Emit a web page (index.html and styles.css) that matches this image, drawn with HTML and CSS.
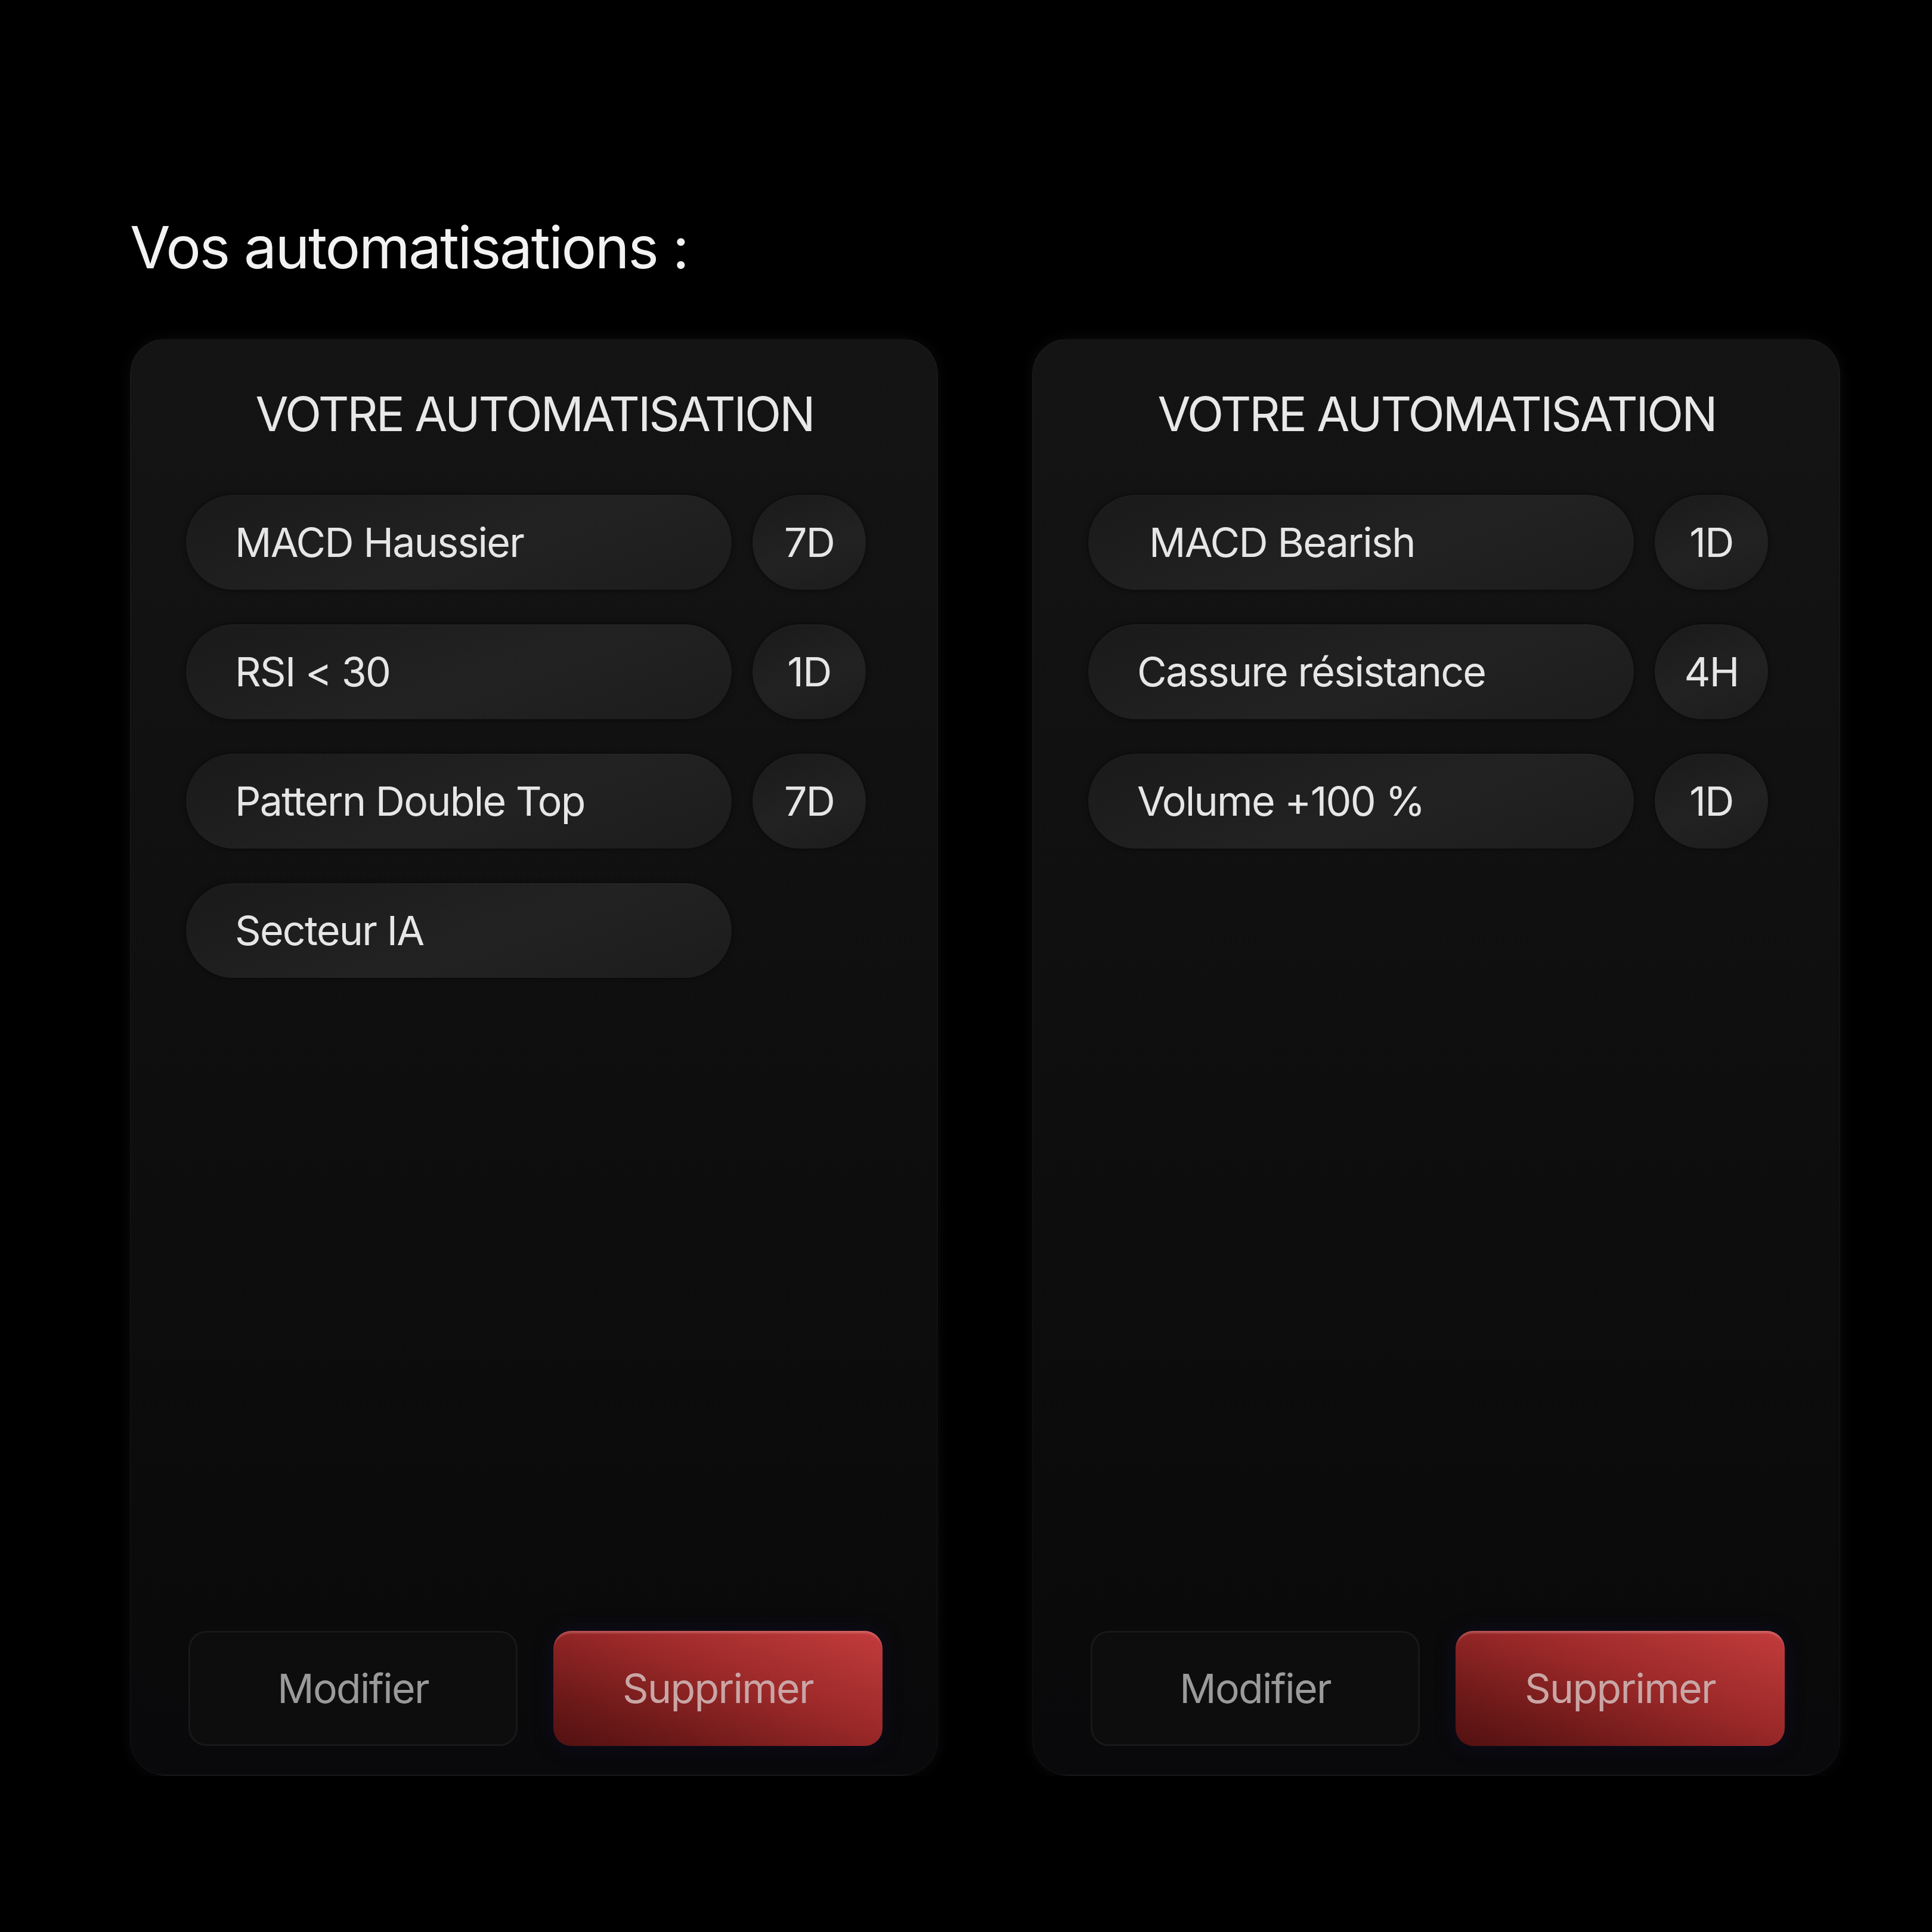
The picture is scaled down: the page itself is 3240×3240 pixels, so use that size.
FILE: index.html
```html
<!DOCTYPE html>
<html>
<head>
    <title>Vos automatisations</title>
    <link rel="stylesheet" href="styles.css">
</head>
<body>
    <div class="page">
        <h1 class="heading">Vos automatisations :</h1>

        <div class="cards">
            <div class="card">
                <h2 class="card-title">VOTRE AUTOMATISATION</h2>
                <div class="rules">
                    <div class="rule">
                        <div class="pill">MACD Haussier</div>
                        <div class="chip">7D</div>
                    </div>
                    <div class="rule">
                        <div class="pill">RSI &lt; 30</div>
                        <div class="chip">1D</div>
                    </div>
                    <div class="rule">
                        <div class="pill">Pattern Double Top</div>
                        <div class="chip">7D</div>
                    </div>
                    <div class="rule">
                        <div class="pill">Secteur IA</div>
                    </div>
                </div>
                <div class="actions">
                    <button class="btn btn-edit">Modifier</button>
                    <button class="btn btn-delete">Supprimer</button>
                </div>
            </div>

            <div class="card">
                <h2 class="card-title">VOTRE AUTOMATISATION</h2>
                <div class="rules">
                    <div class="rule">
                        <div class="pill pill-wide">MACD Bearish</div>
                        <div class="chip">1D</div>
                    </div>
                    <div class="rule">
                        <div class="pill">Cassure résistance</div>
                        <div class="chip">4H</div>
                    </div>
                    <div class="rule">
                        <div class="pill">Volume +100 %</div>
                        <div class="chip">1D</div>
                    </div>
                </div>
                <div class="actions">
                    <button class="btn btn-edit">Modifier</button>
                    <button class="btn btn-delete">Supprimer</button>
                </div>
            </div>
        </div>
    </div>
</body>
</html>
```

FILE: styles.css
```css
body {
    margin: 0;
    background-color: #000;
    font-family: Inter, "Liberation Sans", sans-serif;
    color: #ececec;
}
.page {
    padding: 356px 0 0 218px;
}
.heading {
    margin: 0;
    font-size: 98px;
    font-weight: 400;
    line-height: 1.2;
    letter-spacing: -0.025em;
    color: #f2f2f2;
}
.cards {
    display: grid;
    grid-template-columns: 1355px 1355px;
    gap: 158px;
    margin-top: 94px;
}
.card {
    height: 2410px;
    box-sizing: border-box;
    padding: 76px 90px 48px 92px;
    display: flex;
    flex-direction: column;
    border-radius: 60px;
    background: linear-gradient(180deg, #141414 0%, #101010 40%, #0b0b0b 80%, #09090b 100%);
    border: 2px solid rgba(255, 255, 255, 0.025);
    box-shadow: 0 0 24px rgba(20, 20, 20, 0.6);
}
.card-title {
    margin: 0;
    text-align: center;
    font-size: 80px;
    font-weight: 400;
    line-height: 1.2;
    letter-spacing: -0.038em;
    color: #e8e8e8;
}
.rules {
    display: flex;
    flex-direction: column;
    gap: 58px;
    margin-top: 88px;
}
.rule {
    display: flex;
    gap: 35px;
}
.pill, .chip {
    height: 159px;
    border-radius: 80px;
    display: flex;
    align-items: center;
    font-size: 68px;
    letter-spacing: -0.025em;
    color: #e6e6e6;
    background: linear-gradient(160deg, #1a1a1a 0%, #222 55%, #1c1c1c 100%);
    box-shadow: 0 0 8px rgba(0, 0, 0, 0.6), inset 0 2px 2px rgba(255, 255, 255, 0.02);
}
.pill {
    width: 915px;
    box-sizing: border-box;
    padding-left: 82px;
}
.pill-wide {
    padding-left: 102px;
}
.chip {
    width: 190px;
    justify-content: center;
}
.actions {
    margin-top: auto;
    display: flex;
    gap: 60px;
    padding-left: 4px;
}
.btn {
    width: 552px;
    height: 193px;
    border-radius: 30px;
    font-family: inherit;
    font-size: 68px;
    letter-spacing: -0.025em;
    cursor: pointer;
}
.btn-edit {
    background-color: #0d0d0d;
    border: 3px solid #181818;
    color: #9a9a9a;
}
.btn-delete {
    border: none;
    color: #c9a6a6;
    background: linear-gradient(200deg, #c33c3c 0%, #9a2828 45%, #6a1818 80%, #521111 100%);
    box-shadow: inset 0 6px 3px -2px rgba(255, 190, 190, 0.28), 0 0 30px rgba(16, 14, 40, 0.8);
}
```
